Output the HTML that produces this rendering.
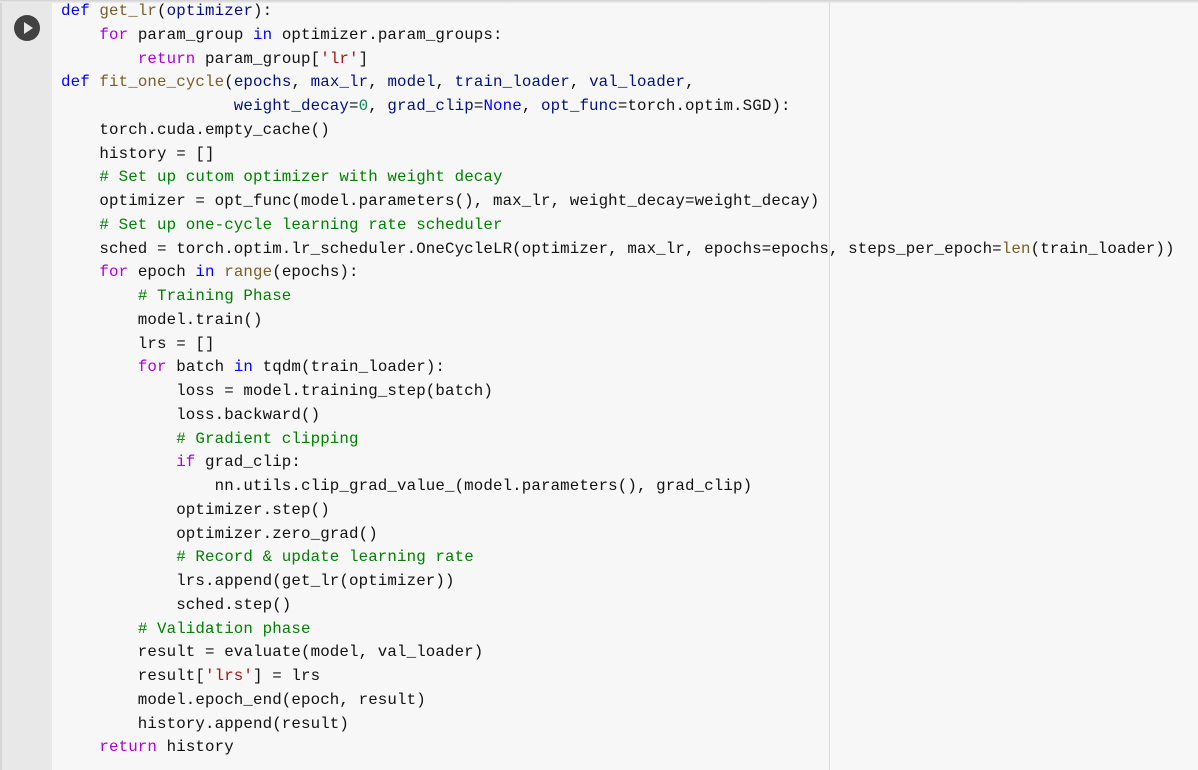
<!DOCTYPE html>
<html><head><meta charset="utf-8"><style>
html,body{margin:0;padding:0;width:1198px;height:770px;overflow:hidden;background:#f7f7f7}
#g{position:absolute;left:0;top:0;width:52px;height:770px;background:#e8e8e8;border-left:2px solid #d6d6d6;box-sizing:border-box}
#top{position:absolute;left:0;top:0;width:1198px;height:3px;background:linear-gradient(#d0d0d0,#f0f0f0)}
#btn{position:absolute;left:14px;top:15px;width:26px;height:26px;border-radius:50%;background:#424242}
#btn:after{content:"";position:absolute;left:10px;top:7px;border-left:9px solid #e8e8e8;border-top:6px solid transparent;border-bottom:6px solid transparent}
#vl{position:absolute;left:829px;top:0;width:1px;height:770px;background:#dcdcdc}
pre{position:absolute;left:61px;top:0px;margin:0;font-family:"Liberation Mono",monospace;font-size:15.8px;letter-spacing:0.12px;line-height:23.75px;color:#111}
.k{color:#0000ff}.c{color:#af00db}.f{color:#795e26}.p{color:#001080}.s{color:#a31515}.m{color:#008000}.n{color:#098658}
</style></head><body>
<div id="g"></div><div id="top"></div><div id="btn"></div><div id="vl"></div>
<pre><span class="k">def</span> <span class="f">get_lr</span>(<span class="p">optimizer</span>):
    <span class="c">for</span> param_group <span class="k">in</span> optimizer.param_groups:
        <span class="c">return</span> param_group[<span class="s">'lr'</span>]
<span class="k">def</span> <span class="f">fit_one_cycle</span>(<span class="p">epochs</span>, <span class="p">max_lr</span>, <span class="p">model</span>, <span class="p">train_loader</span>, <span class="p">val_loader</span>,
                  <span class="p">weight_decay</span>=<span class="n">0</span>, <span class="p">grad_clip</span>=<span class="k">None</span>, <span class="p">opt_func</span>=torch.optim.SGD):
    torch.cuda.empty_cache()
    history = []
    <span class="m"># Set up cutom optimizer with weight decay</span>
    optimizer = opt_func(model.parameters(), max_lr, weight_decay=weight_decay)
    <span class="m"># Set up one-cycle learning rate scheduler</span>
    sched = torch.optim.lr_scheduler.OneCycleLR(optimizer, max_lr, epochs=epochs, steps_per_epoch=<span class="f">len</span>(train_loader))
    <span class="c">for</span> epoch <span class="k">in</span> <span class="f">range</span>(epochs):
        <span class="m"># Training Phase</span>
        model.train()
        lrs = []
        <span class="c">for</span> batch <span class="k">in</span> tqdm(train_loader):
            loss = model.training_step(batch)
            loss.backward()
            <span class="m"># Gradient clipping</span>
            <span class="c">if</span> grad_clip:
                nn.utils.clip_grad_value_(model.parameters(), grad_clip)
            optimizer.step()
            optimizer.zero_grad()
            <span class="m"># Record &amp; update learning rate</span>
            lrs.append(get_lr(optimizer))
            sched.step()
        <span class="m"># Validation phase</span>
        result = evaluate(model, val_loader)
        result[<span class="s">'lrs'</span>] = lrs
        model.epoch_end(epoch, result)
        history.append(result)
    <span class="c">return</span> history</pre>
</body></html>
